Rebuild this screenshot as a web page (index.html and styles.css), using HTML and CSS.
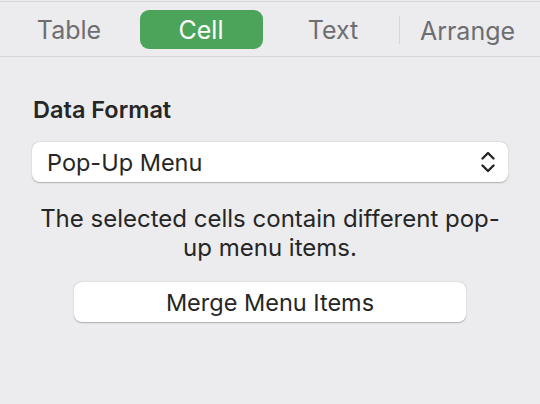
FILE: index.html
```html
<!DOCTYPE html>
<html>
<head>
<meta charset="utf-8">
<link rel="stylesheet" href="styles.css">
</head>
<body>
<div class="panel">
  <div class="tabs">
    <div class="tab">Table</div>
    <div class="tab active"><span class="pill">Cell</span></div>
    <div class="tab">Text</div>
    <div class="tab sep">Arrange</div>
  </div>
  <div class="content">
    <div class="heading">Data Format</div>
    <div class="popup">
      <span>Pop-Up Menu</span>
      <svg class="chev" width="14" height="22" viewBox="0 0 14 22">
        <path d="M1.5 7.5 L7 2 L12.5 7.5" fill="none" stroke="#262626" stroke-width="2.4" stroke-linecap="round" stroke-linejoin="round"/>
        <path d="M1.5 14.5 L7 20 L12.5 14.5" fill="none" stroke="#262626" stroke-width="2.4" stroke-linecap="round" stroke-linejoin="round"/>
      </svg>
    </div>
    <p class="note">The selected cells contain different pop-up menu items.</p>
    <div class="btn-row"><div class="button">Merge Menu Items</div></div>
  </div>
</div>
</body>
</html>
```

FILE: styles.css
```css
html, body {
  margin: 0;
  padding: 0;
  background: #ececef;
}
body {
  font-family: Inter, "Noto Sans", sans-serif;
  color: #262626;
  width: 540px;
  height: 404px;
  overflow: hidden;
}
.panel {
  padding-top: 1px;
}
.tabs {
  display: flex;
  padding: 8px 9px 7px 3px;
  border-top: 1px solid #d6d6da;
  border-bottom: 1px solid #d6d6da;
  height: 39px;
}
.tab {
  flex: 0 0 132px;
  display: flex;
  align-items: center;
  justify-content: center;
  font-size: 25px;
  color: #6e6e70;
  padding-top: 1px;
  box-sizing: border-box;
}
.tab.active {
  padding-top: 0;
}
.tab.sep {
  border-left: 1px solid #d6d6da;
  margin: 6px 0 5px;
  height: 28px;
  padding-left: 4px;
}
.pill {
  width: 123px;
  height: 39px;
  padding-top: 1px;
  box-sizing: border-box;
  background: #4ba45a;
  border-radius: 9px;
  color: #fff;
  display: flex;
  align-items: center;
  justify-content: center;
}
.content {
  padding: 39px 32px 0 32px;
}
.heading {
  font-size: 23.5px;
  font-weight: 600;
  padding-left: 1px;
  line-height: 28px;
}
.popup {
  margin-top: 18px;
  height: 40px;
  background: #fff;
  border-radius: 8px;
  box-shadow: 0 0.5px 1.5px rgba(0,0,0,0.28);
  display: flex;
  align-items: center;
  justify-content: space-between;
  padding: 0 13px 0 15px;
  font-size: 23.5px;
}
.chev {
  display: block;
}
.note {
  margin: 21.5px 0 0;
  text-align: center;
  font-size: 24px;
  line-height: 29px;
}
.btn-row {
  display: flex;
  justify-content: center;
  margin-top: 20.5px;
}
.button {
  width: 392px;
  height: 40px;
  background: #fff;
  border-radius: 8px;
  box-shadow: 0 0.5px 1.5px rgba(0,0,0,0.28);
  display: flex;
  align-items: center;
  justify-content: center;
  font-size: 23.5px;
}
```
